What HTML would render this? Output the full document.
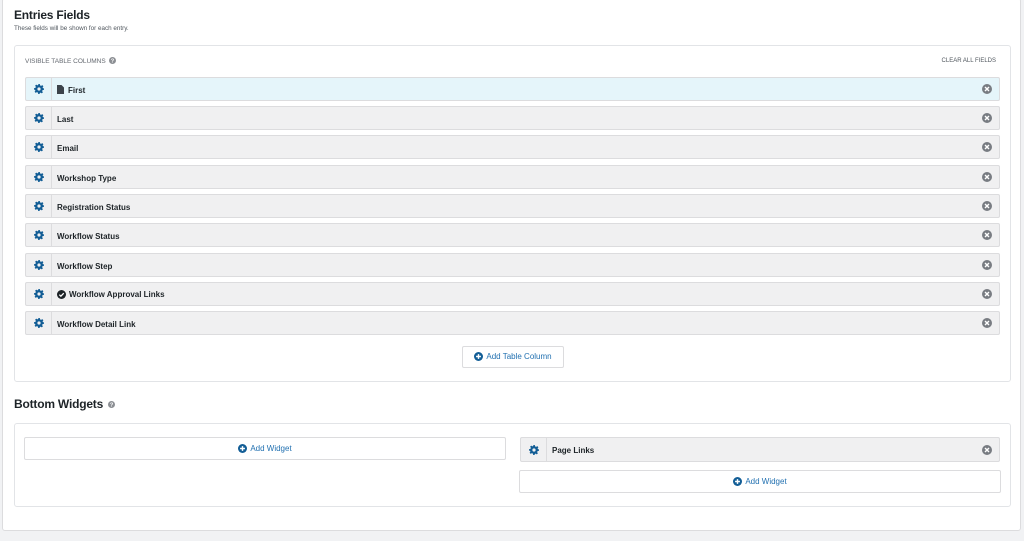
<!DOCTYPE html>
<html><head><meta charset="utf-8"><style>
*{box-sizing:border-box;margin:0;padding:0}
body{width:1024px;height:541px;background:#f1f2f4;font-family:"Liberation Sans",sans-serif;position:relative;overflow:hidden;color:#1d2327}
.panel{position:absolute;left:2px;top:-2px;width:1019px;height:533px;background:#fff;border:1px solid #dcdcde;border-radius:3px}
.abs{position:absolute}
h2{position:absolute;font-size:12px;letter-spacing:-0.2px;font-weight:bold;color:#1d2327}
.box{position:absolute;left:14px;width:997px;border:1px solid #e2e4e7;border-radius:3px;background:#fff}
.row{position:absolute;left:25px;width:975px;height:24px;background:#f0f0f1;border:1px solid #dcdcde;border-radius:2px;font-size:8px;font-weight:bold;color:#1d2327}
.row .g{position:absolute;left:0;top:0;width:26px;height:22px;border-right:1px solid #dcdcde}
.row .g svg{position:absolute;left:8px;top:6px}
.row .t{position:absolute;left:31px;top:8px}
.row .x{position:absolute;right:7px;top:6px}
.btn{position:absolute;background:#fff;border:1px solid #dcdcde;border-radius:2px;font-size:8px;color:#2271b1;text-align:center}
.btn svg{vertical-align:-2px;margin-right:3px}
</style></head><body>
<svg width="0" height="0" style="position:absolute"><defs>
<symbol id="gear" viewBox="0 0 10 10"><path fill="#135e96" d="M4.2 0h1.6l.3 1.4 1 .5 1.2-.8 1.1 1.1-.8 1.2.5 1L10 4.2v1.6l-1.4.3-.5 1 .8 1.2-1.1 1.1-1.2-.8-1 .5L5.8 10H4.2l-.3-1.4-1-.5-1.200.8-1.1-1.1.8-1.2-.5-1L0 5.8V4.2l1.4-.3.5-1-.8-1.2 1.1-1.1 1.2.8 1-.5z"/><circle cx="5" cy="5" r="1.6" fill="#f0f0f1"/></symbol>
<symbol id="xc" viewBox="0 0 10 10"><circle cx="5" cy="5" r="5" fill="#787c82"/><path d="M3 3l4 4M7 3L3 7" stroke="#fff" stroke-width="1.4"/></symbol>
<symbol id="plus" viewBox="0 0 10 10"><circle cx="5" cy="5" r="5" fill="#135e96"/><path d="M5 2.3v5.4M2.3 5h5.4" stroke="#fff" stroke-width="1.6"/></symbol>
<symbol id="q" viewBox="0 0 10 10"><circle cx="5" cy="5" r="5" fill="#8c8f94"/><text x="5" y="8" font-size="8" font-weight="bold" fill="#fff" text-anchor="middle" font-family="Liberation Sans">?</text></symbol>
</defs></svg>
<div class="panel"></div>
<h2 style="left:14px;top:8px">Entries Fields</h2>
<div class="abs" style="left:14px;top:25px;font-size:6.3px;color:#50575e">These fields will be shown for each entry.</div>
<div class="box" style="top:45px;height:337px"></div>
<div class="abs" style="left:25px;top:57px;font-size:6.5px;color:#646970">VISIBLE TABLE COLUMNS <svg width="7" height="7" style="vertical-align:-1px;margin-left:2px"><use href="#q"/></svg></div>
<div class="abs" style="right:28px;top:58px;font-size:6px;color:#50575e">CLEAR ALL FIELDS</div>

<div class="row" style="top:77px;background:#e5f5fa"><div class="g"><svg width="10" height="10"><use href="#gear"/></svg></div><span class="t" style="left:31px;top:7px"><svg width="7" height="9" style="vertical-align:-1px;margin-right:4px" viewBox="0 0 7 9"><path d="M0 0h4.5L7 2.5V9H0z" fill="#3c434a"/></svg>First</span><svg class="x" width="10" height="10"><use href="#xc"/></svg></div>
<div class="row" style="top:106px"><div class="g"><svg width="10" height="10"><use href="#gear"/></svg></div><span class="t">Last</span><svg class="x" width="10" height="10"><use href="#xc"/></svg></div>
<div class="row" style="top:135px"><div class="g"><svg width="10" height="10"><use href="#gear"/></svg></div><span class="t">Email</span><svg class="x" width="10" height="10"><use href="#xc"/></svg></div>
<div class="row" style="top:165px"><div class="g"><svg width="10" height="10"><use href="#gear"/></svg></div><span class="t">Workshop Type</span><svg class="x" width="10" height="10"><use href="#xc"/></svg></div>
<div class="row" style="top:194px"><div class="g"><svg width="10" height="10"><use href="#gear"/></svg></div><span class="t">Registration Status</span><svg class="x" width="10" height="10"><use href="#xc"/></svg></div>
<div class="row" style="top:223px"><div class="g"><svg width="10" height="10"><use href="#gear"/></svg></div><span class="t">Workflow Status</span><svg class="x" width="10" height="10"><use href="#xc"/></svg></div>
<div class="row" style="top:253px"><div class="g"><svg width="10" height="10"><use href="#gear"/></svg></div><span class="t">Workflow Step</span><svg class="x" width="10" height="10"><use href="#xc"/></svg></div>
<div class="row" style="top:282px"><div class="g"><svg width="10" height="10"><use href="#gear"/></svg></div><span class="t" style="top:7px"><svg width="9" height="9" style="vertical-align:-2px;margin-right:3px" viewBox="0 0 10 10"><circle cx="5" cy="5" r="5" fill="#1d2327"/><path d="M2.6 5.2l1.7 1.7 3.2-3.4" stroke="#fff" stroke-width="1.4" fill="none"/></svg>Workflow Approval Links</span><svg class="x" width="10" height="10"><use href="#xc"/></svg></div>
<div class="row" style="top:311px"><div class="g"><svg width="10" height="10"><use href="#gear"/></svg></div><span class="t">Workflow Detail Link</span><svg class="x" width="10" height="10"><use href="#xc"/></svg></div>

<div class="btn" style="left:462px;top:346px;width:102px;height:22px;line-height:20px"><svg width="9" height="9"><use href="#plus"/></svg>Add Table Column</div>

<h2 style="left:14px;top:397px">Bottom Widgets <svg width="7" height="7" style="vertical-align:0;margin-left:2px"><use href="#q"/></svg></h2>
<div class="box" style="top:423px;height:84px"></div>
<div class="btn" style="left:24px;top:437px;width:482px;height:23px;line-height:21px"><svg width="9" height="9"><use href="#plus"/></svg>Add Widget</div>
<div class="row" style="left:520px;width:480px;top:437px;height:25px"><div class="g" style="height:23px"><svg width="10" height="10" style="top:7px"><use href="#gear"/></svg></div><span class="t" style="top:8px">Page Links</span><svg class="x" width="10" height="10" style="top:7px"><use href="#xc"/></svg></div>
<div class="btn" style="left:519px;top:470px;width:482px;height:23px;line-height:21px"><svg width="9" height="9"><use href="#plus"/></svg>Add Widget</div>
</body></html>
